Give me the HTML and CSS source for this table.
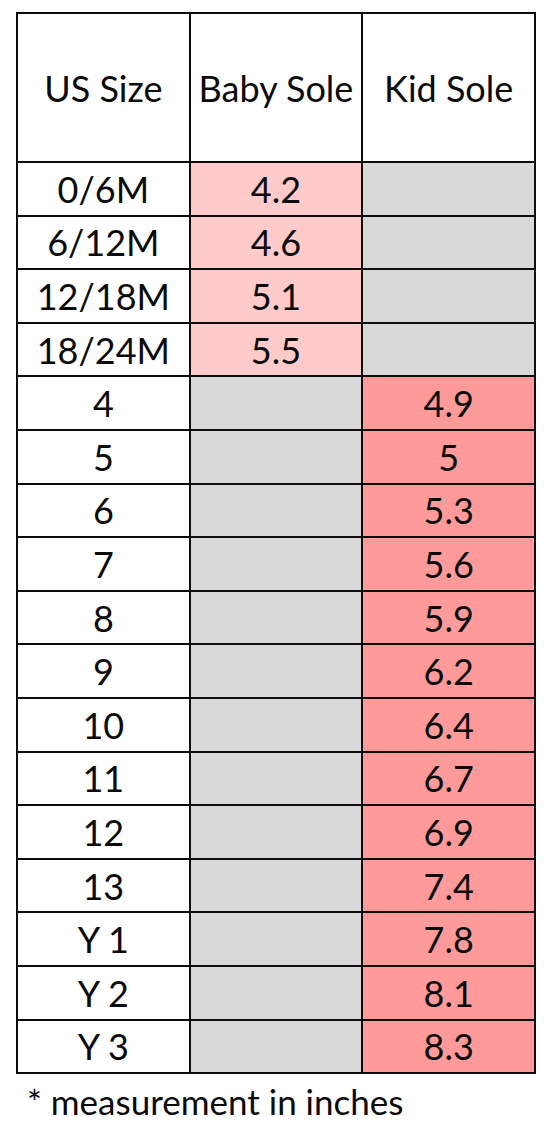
FILE: index.html
```html
<!DOCTYPE html>
<html>
<head>
    <meta charset="UTF-8">
    <title>Size Chart</title>
    <link rel="stylesheet" href="styles.css">
</head>
<body>
<div id="chart">
    <table>
        <tr class="head"><th>US Size</th><th>Baby Sole</th><th>Kid Sole</th></tr>
        <tr><td>0/6M</td><td class="baby">4.2</td><td class="none"></td></tr>
        <tr><td>6/12M</td><td class="baby">4.6</td><td class="none"></td></tr>
        <tr><td>12/18M</td><td class="baby">5.1</td><td class="none"></td></tr>
        <tr><td>18/24M</td><td class="baby">5.5</td><td class="none"></td></tr>
        <tr><td>4</td><td class="none"></td><td class="kid">4.9</td></tr>
        <tr><td>5</td><td class="none"></td><td class="kid">5</td></tr>
        <tr><td>6</td><td class="none"></td><td class="kid">5.3</td></tr>
        <tr><td>7</td><td class="none"></td><td class="kid">5.6</td></tr>
        <tr><td>8</td><td class="none"></td><td class="kid">5.9</td></tr>
        <tr><td>9</td><td class="none"></td><td class="kid">6.2</td></tr>
        <tr><td>10</td><td class="none"></td><td class="kid">6.4</td></tr>
        <tr><td>11</td><td class="none"></td><td class="kid">6.7</td></tr>
        <tr><td>12</td><td class="none"></td><td class="kid">6.9</td></tr>
        <tr><td>13</td><td class="none"></td><td class="kid">7.4</td></tr>
        <tr><td>Y 1</td><td class="none"></td><td class="kid">7.8</td></tr>
        <tr><td>Y 2</td><td class="none"></td><td class="kid">8.1</td></tr>
        <tr><td>Y 3</td><td class="none"></td><td class="kid">8.3</td></tr>
    </table>
    <p class="note">* measurement in inches</p>
</div>
</body>
</html>
```

FILE: styles.css
```css
*{ margin:0; padding:0; font-family:Lato,"Open Sans",sans-serif;}
body{ background:#fff; color:#0a0a0a;}
#chart{
    padding: 12px 0 0 16px;
}
#chart table{
    border-collapse: collapse;
    table-layout: fixed;
    width: 520px;
}
#chart th,
#chart td{
    border: 2px solid #0c0c0c;
    text-align: center;
    font-size: 36px;
    font-weight: normal;
    height: 51.6px;
    line-height: 30px;
    padding: 0;
}
#chart tr.head th{
    height: 147px;
    background: #fff;
}
#chart td.baby{
    background: #ffcaca;
}
#chart td.none{
    background: #d8d8d8;
}
#chart td.kid{
    background: #ff9a9a;
}
#chart .note{
    font-size: 35px;
    padding: 6px 0 0 11px;
}
```
